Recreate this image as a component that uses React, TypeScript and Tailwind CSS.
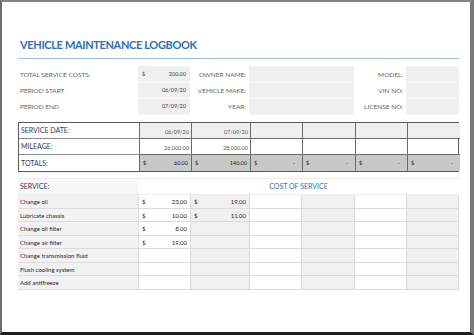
const font = { fontFamily: 'Lato, "Open Sans", "Liberation Sans", sans-serif' };

const cols = 'grid grid-cols-[120px_52px_59px_52px_53px_52px_53px]';

const services: [string, string, string][] = [
  ['Change oil', '23.00', '19.00'],
  ['Lubricate chassis', '10.00', '11.00'],
  ['Change oil filter', '8.00', ''],
  ['Change air filter', '19.00', ''],
  ['Change transmission fluid', '', ''],
  ['Flush cooling system', '', ''],
  ['Add antifreeze', '', ''],
];

const rowHeights = ['h-[14px]', 'h-[13px]', 'h-[14px]', 'h-[13px]', 'h-[14px]', 'h-[13px]', 'h-[14px]'];

function Money({ value, dash }: { value: string; dash?: boolean }) {
  return (
    <div className="flex h-full items-center justify-between px-[3px]">
      <span>$</span>
      <span className={dash ? 'pr-[4px]' : ''}>{value}</span>
    </div>
  );
}

export default function App() {
  return (
    <div
      className="w-[474px] h-[335px] box-border bg-white border-l-2 border-t-2 border-r-[4px] border-b-[3px] border-l-[#6e6e6e] border-t-[#858585] border-r-[#7a7a7a] border-b-[#1f1f1f] pl-[16px]"
      style={font}
    >
      <div className="w-[441px]">
        {/* Title */}
        <div className="pt-[36px] pl-[2px] h-[56px] text-[11px] font-bold text-[#2e6fb7] tracking-[-0.35px] leading-[14px]">
          VEHICLE MAINTENANCE LOGBOOK
        </div>
        <div className="h-px bg-[#9dc3e6]" />

        {/* Summary */}
        <div className={`${cols} mt-[7px] text-[6.5px] text-[#5f5f5f]`}>
          {[
            ['TOTAL SERVICE COSTS:', '200.00', 'OWNER NAME:', 'MODEL:', 'h-[17px]'],
            ['PERIOD START', '06/09/20', 'VEHICLE MAKE:', 'VIN NO:', 'h-[16px]'],
            ['PERIOD END', '07/09/20', 'YEAR:', 'LICENSE NO:', 'h-[16px]'],
          ].map(([a, b, c, d, h], i) => (
            <div key={a} className="contents">
              <div className={`${h} flex items-center pl-[2px]`}>{a}</div>
              <div className={`${h} flex items-center justify-between bg-[#efefef] px-[4px] text-[5.5px] text-[#404040] border-b border-[#f8f8f8]`}>
                <span>{i === 0 ? '$' : ''}</span>
                <span>{b}</span>
              </div>
              <div className={`${h} flex items-center justify-end pr-[3px]`}>{c}</div>
              <div className={`${h} col-span-2 bg-[#efefef] border-b border-[#f8f8f8]`} />
              <div className={`${h} flex items-center justify-end pr-[3px]`}>{d}</div>
              <div className={`${h} bg-[#efefef] border-b border-[#f8f8f8]`} />
            </div>
          ))}
        </div>

        {/* Service dates */}
        <div className={`${cols} mt-[7px] border border-[#5a5a5a] text-[#303d52]`}>
          <div className="h-[16px] flex items-center pl-[2px] text-[7px] border-b border-[#8a8a8a]">SERVICE DATE:</div>
          {['06/09/20', '07/09/20', '', '', '', ''].map((v, i) => (
            <div key={i} className="h-[16px] flex items-end justify-end pb-[2px] pr-[2px] bg-[#efefef] border-l border-b border-[#6a6a6a] text-[5.5px] text-[#555]">
              {v}
            </div>
          ))}
          <div className="h-[16px] flex items-center pl-[2px] text-[7px] border-b border-[#8a8a8a]">MILEAGE:</div>
          {['26,000.00', '28,000.00', '', '', '', ''].map((v, i) => (
            <div key={i} className="h-[16px] flex items-end justify-end pb-[2px] pr-[2px] border-l border-b border-[#6a6a6a] text-[5.5px] text-[#555]">
              {v}
            </div>
          ))}
          <div className="h-[16px] flex items-center pl-[2px] text-[7px]">TOTALS:</div>
          {['60.00', '140.00', '-', '-', '-', '-'].map((v, i) => (
            <div key={i} className="h-[16px] bg-[#c8c8c8] border-l border-[#6a6a6a] text-[5.5px] text-[#262626]">
              <Money value={v} dash={v === '-'} />
            </div>
          ))}
        </div>

        {/* Services */}
        <div className={`${cols} mt-[6px] text-[6px] text-[#262626]`}>
          <div className="h-[17px] flex items-center pl-[2px] text-[7px] text-[#303d52] bg-[#f7f7f7] border-t border-b border-[#ececec]">
            SERVICE:
          </div>
          <div className="h-[17px] col-span-6 flex items-center justify-center text-[7px] text-[#2e6fb7] border-t border-b border-[#ececec]">
            COST OF SERVICE
          </div>
          {services.map(([name, a, b], r) => (
            <div key={name} className="contents">
              <div className={`${rowHeights[r]} flex items-center pl-[2px] bg-[#f2f2f2] border-b border-[#dcdcdc]`}>{name}</div>
              {[a, b, '', '', '', ''].map((v, i) => (
                <div
                  key={i}
                  className={`${rowHeights[r]} border-l border-b border-[#dcdcdc] ${i % 2 === 1 ? 'bg-[#f0f0f0]' : 'bg-white'} ${i === 5 ? 'border-r' : ''}`}
                >
                  {v ? <Money value={v} /> : null}
                </div>
              ))}
            </div>
          ))}
        </div>
      </div>
    </div>
  );
}
